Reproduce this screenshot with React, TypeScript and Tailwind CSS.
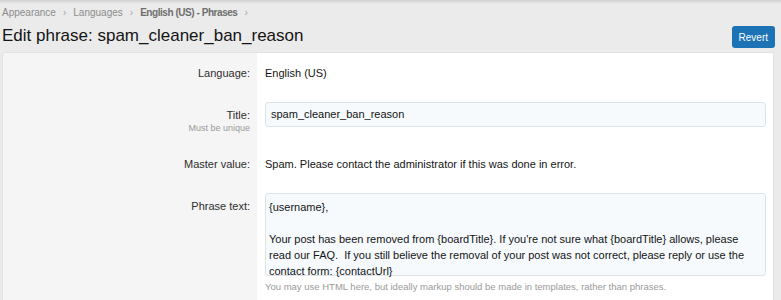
import React from "react";

const font = { fontFamily: '"Liberation Sans", Arial, Helvetica, sans-serif' };

function Crumb({ children, strong }: { children: React.ReactNode; strong?: boolean }) {
  return (
    <span className="flex items-center">
      <span className={strong ? "text-[#6f6f6f] font-bold tracking-[-0.45px]" : "text-[#8c8c8c]"}>{children}</span>
      <span className="mx-[7px] text-[#a5a5a5] text-[10px]">›</span>
    </span>
  );
}

function Row({
  label,
  hint,
  children,
  labelPt = "pt-0",
  pb = "pb-[10px]",
}: {
  label: string;
  hint?: string;
  children: React.ReactNode;
  labelPt?: string;
  pb?: string;
}) {
  return (
    <div className="flex">
      <div className={`w-[254px] shrink-0 bg-[#f5f5f5] pr-[7px] text-right pt-[12px] ${pb}`}>
        <div className={labelPt}>
          <div className="text-[11px] leading-[16px] text-[#2d2d2d]">{label}</div>
          {hint && <div className="text-[9px] leading-[11px] text-[#9a9a9a]">{hint}</div>}
        </div>
      </div>
      <div className={`flex-1 bg-white pl-[8px] pr-[7px] pt-[12px] ${pb}`}>{children}</div>
    </div>
  );
}

export default function App() {
  return (
    <div className="min-h-[300px] bg-[#ebebeb] text-[#141414]" style={font}>
      <div className="h-[4px] bg-gradient-to-b from-[#d2d2d2] to-[#ebebeb]" />
      <div className="pl-[2px] pr-[6px]">
        <div className="flex items-center h-[14px] text-[10px] mt-[1px]">
          <Crumb>Appearance</Crumb>
          <Crumb>Languages</Crumb>
          <Crumb strong>English (US) - Phrases</Crumb>
        </div>
        <div className="flex items-end justify-between h-[30px]">
          <h1 className="text-[17px] leading-[22px] text-[#141414] mb-[2px]">
            Edit phrase: spam_cleaner_ban_reason
          </h1>
          <button className="h-[22px] px-[7px] rounded-[3px] bg-[#1b72b4] text-white text-[10px] mb-[1px]">
            Revert
          </button>
        </div>
      </div>
      <div className="ml-[2px] mr-[7px] mt-[3px] border border-[#e2e2e2] rounded-[3px] overflow-hidden">
        <Row label="Language:" pb="pb-[9px]">
          <div className="text-[11px] leading-[16px]">English (US)</div>
        </Row>
        <Row label="Title:" hint="Must be unique" labelPt="pt-[5px]">
          <div className="h-[25px] border border-[#dde3e7] rounded-[3px] bg-[#f6fafd] px-[5px] flex items-center text-[11px]">
            spam_cleaner_ban_reason
          </div>
        </Row>
        <Row label="Master value:" pb="pb-[9px]">
          <div className="text-[11px] leading-[16px]">
            Spam. Please contact the administrator if this was done in error.
          </div>
        </Row>
        <Row label="Phrase text:" labelPt="pt-[5px]">
          <div className="h-[83px] border border-[#dde3e7] rounded-[3px] bg-[#f6fafd] px-[3px] pt-[5px] text-[11px] leading-[16px] whitespace-pre">
            {"{username},\n\nYour post has been removed from {boardTitle}. If you're not sure what {boardTitle} allows, please\nread our FAQ.  If you still believe the removal of your post was not correct, please reply or use the\ncontact form: {contactUrl}"}
          </div>
          <div className="mt-[5px] text-[9.5px] leading-[12px] text-[#9a9a9a]">
            You may use HTML here, but ideally markup should be made in templates, rather than phrases.
          </div>
        </Row>
      </div>
    </div>
  );
}
